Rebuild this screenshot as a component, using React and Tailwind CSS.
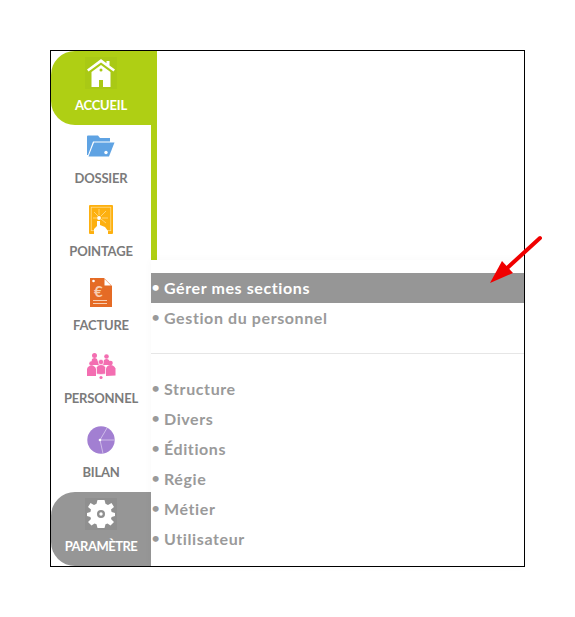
import React from 'react';

const font = { fontFamily: 'Lato, "Open Sans", sans-serif' };

function HouseIcon() {
    return (
        <div className="w-8 h-8 bg-[#a9c915] flex items-center justify-center">
            <svg width="28" height="28" viewBox="0 0 28 28" fill="#fff">
                <path d="M14 0 L0 10.5 L1.5 12.5 L14 3.5 L26.5 12.5 L28 10.5 L22.5 6.5 V2 H19.5 V4.3 Z" />
                <path d="M14 6 L4.5 13 V28 H12 V21 H16 V28 H23.5 V13 Z M14 9.5 a1.5 1.5 0 1 1 0 3 a1.5 1.5 0 1 1 0 -3 Z" fillRule="evenodd" />
            </svg>
        </div>
    );
}

function FolderIcon() {
    return (
        <svg width="28" height="22" viewBox="0 0 28 22">
            <path d="M0 20 V1.5 Q0 0.5 1 0.5 H11 L13 3 H23 V6.5 H6 L1 20 Z" fill="#5fa3e3" />
            <path d="M1.5 21.5 L7 7.5 H27.5 L22 21.5 Z" fill="#5fa3e3" />
            <circle cx="19" cy="17.5" r="1.7" fill="#fff" />
        </svg>
    );
}

function PointageIcon() {
    return (
        <svg width="24" height="29" viewBox="0 0 24 29">
            <rect x="0" y="0" width="24" height="29" rx="1" fill="#fdb00f" />
            <rect x="2.2" y="2.2" width="19.6" height="23.5" fill="none" stroke="#ffe3a3" strokeWidth="0.7" />
            <g stroke="#ffe3a3" strokeWidth="0.7">
                <path d="M9 11 L5 7 M10 10 V4 M12 11 L17 6 M8 13 H4 M13 13 H19 M12 14 L17 18" />
            </g>
            <circle cx="10" cy="13" r="1.9" fill="#fff" />
            <path d="M5 29 V24 L8 21 V16 H11 V20 L16 22 L19 26 V29 Z" fill="#fff" />
        </svg>
    );
}

function FactureIcon() {
    return (
        <svg width="22" height="29" viewBox="0 0 22 29">
            <path d="M0 0 H14 L22 8 V29 H0 Z" fill="#e56b25" />
            <path d="M14.5 1 V7.5 H21 Z" fill="#fff" />
            <circle cx="3.5" cy="3" r="1.3" fill="#fff" />
            <text x="4" y="19" fontSize="15" fill="#f8cdb0" style={{ fontFamily: 'Lato, sans-serif' }}>€</text>
            <path d="M3 22.5 H17 M3 25.5 H17" stroke="#f8cdb0" strokeWidth="1" />
        </svg>
    );
}

function PersonnelIcon() {
    return (
        <svg width="29" height="27" viewBox="0 0 29 27" fill="#f36eb1">
            <circle cx="7.5" cy="2.5" r="2.5" />
            <circle cx="19.5" cy="3.5" r="2.3" />
            <path d="M4 12 L5 6 Q7.5 4 10 6 L12 12 Z" />
            <path d="M16 12 L17 7 Q19.5 5 22 7 L24 12 Z" />
            <circle cx="4.5" cy="10.5" r="2.3" />
            <circle cx="23.5" cy="10" r="2.3" />
            <path d="M0 23 V16 Q1 12.5 4.5 12.5 Q8 12.5 9 16 V23 Z" />
            <path d="M19 23 V15.5 Q20 12 23.5 12 Q27 12 28.5 15.5 V22.5 Z" />
            <circle cx="14" cy="9" r="2.6" stroke="#fff" strokeWidth="0.5" />
            <path d="M9.5 21 V14.5 Q10.5 11.5 14 11.5 Q17.5 11.5 18.5 14.5 V21 L14 21.5 Z" stroke="#fff" strokeWidth="0.6" />
            <circle cx="14" cy="24.5" r="1.6" />
        </svg>
    );
}

function BilanIcon() {
    return (
        <svg width="28" height="28" viewBox="0 0 28 28">
            <circle cx="14" cy="14" r="13.7" fill="#a27fd2" />
            <path d="M13 14 L20 2 M13 14 L27.5 14 M13 14 L16 27.5" stroke="#d9cbee" strokeWidth="0.8" fill="none" />
            <circle cx="13" cy="14" r="1.3" fill="#fff" />
        </svg>
    );
}

function GearIcon() {
    return (
        <div className="w-8 h-8 bg-[#8f8f8f] flex items-center justify-center">
            <svg width="28" height="28" viewBox="0 0 28 28">
                <path
                    fill="#fff"
                    fillRule="evenodd"
                    d="M10.5 0 H17.5 L18.5 3.8 L21 4.9 L24.5 3 L27 7 L24 9.5 L24.6 12 L28 13 V16 L24.6 17 L24 19 L27 22 L23.5 25.5 L20.5 23.5 L18.5 24.3 L17.5 28 H10.5 L9.5 24.3 L7.5 23.5 L4.5 25.5 L1 22 L4 19 L3.4 17 L0 16 V13 L3.4 12 L4 9.5 L1 7 L3.5 3 L7 4.9 L9.5 3.8 Z M14 10 a4 4 0 1 0 0 8 a4 4 0 1 0 0 -8 Z"
                />
                <circle cx="14" cy="14" r="1.7" fill="#fff" />
            </svg>
        </div>
    );
}

const navItems = [
    { label: 'ACCUEIL', icon: <HouseIcon />, className: 'bg-[#afcf14] rounded-l-3xl text-white', iconClass: 'mt-[1px]' },
    { label: 'DOSSIER', icon: <FolderIcon />, className: 'text-[#7b7b7b]' },
    { label: 'POINTAGE', icon: <PointageIcon />, className: 'text-[#7b7b7b]' },
    { label: 'FACTURE', icon: <FactureIcon />, className: 'text-[#7b7b7b]' },
    { label: 'PERSONNEL', icon: <PersonnelIcon />, className: 'text-[#7b7b7b]' },
    { label: 'BILAN', icon: <BilanIcon />, className: 'text-[#7b7b7b]' },
    { label: 'PARAMÈTRE', icon: <GearIcon />, className: 'bg-[#969696] rounded-l-3xl text-white tracking-[-0.5px]', iconClass: 'mt-[1px]' },
];

function MenuRow({ label, active }) {
    return (
        <div className={`h-[30px] flex items-center text-[16px] font-bold tracking-[0.6px] ${active ? 'bg-[#969696] text-white' : 'text-[#9a9a9a]'}`}>
            <span className="w-[13px] font-normal mb-[3px]">•</span>
            <span>{label}</span>
        </div>
    );
}

export default function App() {
    return (
        <div className="w-[575px] h-[617px] bg-white pt-[50px] pl-[50px] relative" style={font}>
            <div className="w-[475px] h-[517px] border border-black flex bg-white">
                <div className="w-[100px] shrink-0 grid grid-rows-7">
                    {navItems.map((item) => (
                        <div key={item.label} className={`flex flex-col items-center pt-[4px] text-[13px] font-bold tracking-[-0.2px] ${item.className}`}>
                            <div className={`h-[34px] flex items-center justify-center ${item.iconClass || ''}`}>{item.icon}</div>
                            <div className="mt-[7px] leading-4">{item.label}</div>
                        </div>
                    ))}
                </div>
                <div className="flex-1 flex flex-col">
                    <div className="h-[209px] border-l-[6px] border-[#afcf14]"></div>
                    <div className="flex-1 pt-[13px] shadow-[0_0_8px_rgba(0,0,0,0.03)]">
                        <MenuRow label="Gérer mes sections" active />
                        <MenuRow label="Gestion du personnel" />
                        <div className="my-5 border-t border-[#e6e6e6]"></div>
                        <MenuRow label="Structure" />
                        <MenuRow label="Divers" />
                        <MenuRow label="Éditions" />
                        <MenuRow label="Régie" />
                        <MenuRow label="Métier" />
                        <MenuRow label="Utilisateur" />
                    </div>
                </div>
            </div>
            <svg className="absolute left-[485px] top-[232px]" width="60" height="56" viewBox="0 0 60 56">
                <path d="M55 6 L20 38" stroke="#f00000" strokeWidth="4" strokeLinecap="round" />
                <path d="M5 51 L17 29 L28 41 Z" fill="#f00000" />
            </svg>
        </div>
    );
}
